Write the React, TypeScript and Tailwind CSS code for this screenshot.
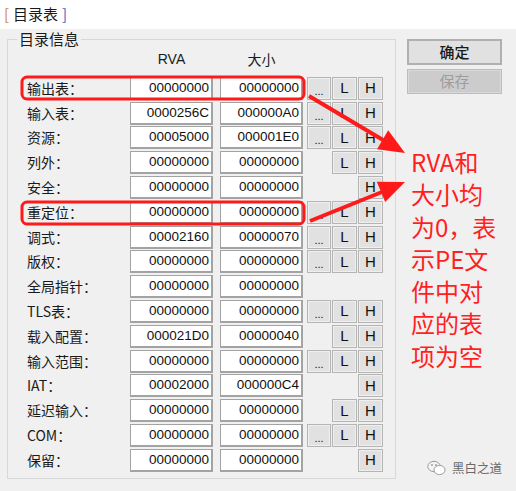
import React from "react";

type Row = {
  label: string;
  rva: string;
  size: string;
  dots?: boolean;
  l?: boolean;
  h?: boolean;
};

const rows: Row[] = [
  { label: "输出表：", rva: "00000000", size: "00000000", dots: true, l: true, h: true },
  { label: "输入表：", rva: "0000256C", size: "000000A0", dots: true, l: true, h: true },
  { label: "资源：", rva: "00005000", size: "000001E0", dots: true, l: true, h: true },
  { label: "列外：", rva: "00000000", size: "00000000", l: true, h: true },
  { label: "安全：", rva: "00000000", size: "00000000", h: true },
  { label: "重定位：", rva: "00000000", size: "00000000", dots: true, l: true, h: true },
  { label: "调式：", rva: "00002160", size: "00000070", dots: true, l: true, h: true },
  { label: "版权：", rva: "00000000", size: "00000000", dots: true, l: true, h: true },
  { label: "全局指针：", rva: "00000000", size: "00000000" },
  { label: "TLS表：", rva: "00000000", size: "00000000", dots: true, l: true, h: true },
  { label: "载入配置：", rva: "000021D0", size: "00000040", l: true, h: true },
  { label: "输入范围：", rva: "00000000", size: "00000000", dots: true, l: true, h: true },
  { label: "IAT：", rva: "00002000", size: "000000C4", h: true },
  { label: "延迟输入：", rva: "00000000", size: "00000000", l: true, h: true },
  { label: "COM：", rva: "00000000", size: "00000000", dots: true, l: true, h: true },
  { label: "保留：", rva: "00000000", size: "00000000", h: true },
];

const note = ["RVA和", "大小均", "为0，表", "示PE文", "件中对", "应的表", "项为空"];

function ValueBox({ value }: { value: string }) {
  return (
    <div className="w-[83px] h-[23px] bg-white border border-[#a3a3a3] border-r-2 border-b-2 flex items-center justify-end pr-[2px] text-[13.5px] text-[#111] font-['Liberation_Sans',sans-serif]">
      {value}
    </div>
  );
}

function SmallButton({ children, show, wide }: { children: React.ReactNode; show?: boolean; wide?: boolean }) {
  if (!show) return <div className={wide ? "w-[24px]" : "w-[25px]"} />;
  return (
    <div
      className={
        "h-[23px] bg-[#e1e1e1] border border-[#b4b4b4] shadow-[inset_0_0_0_1px_#efefef] flex items-center justify-center text-[#111] " +
        (wide ? "w-[24px]" : "w-[25px]")
      }
    >
      {children}
    </div>
  );
}

export default function App() {
  return (
    <div className="relative w-[516px] h-[491px] bg-[#f0f0f0] overflow-hidden font-['Noto_Sans_CJK_SC',sans-serif] text-[#1a1a1a]">
      {/* title strip */}
      <div className="h-[29px] bg-white flex items-center pl-[4px] text-[15px]">
        <span className="text-[#d9822b]">[</span>
        <span className="ml-[4px]">目录表</span>
        <span className="ml-[4px] text-[#2f6bc4]">]</span>
      </div>

      <div className="flex">
        {/* group box */}
        <fieldset className="ml-[7px] w-[389px] h-[450px] border border-[#d8d8d8]">
          <legend className="ml-[9px] px-[2px] text-[15px] leading-[20px]">目录信息</legend>

          <div className="flex h-[20px] items-center text-[14px]">
            <div className="w-[122px]" />
            <div className="w-[83px] text-center font-['Liberation_Sans',sans-serif]">RVA</div>
            <div className="w-[7px]" />
            <div className="w-[83px] text-center">大小</div>
          </div>

          <div className="mt-[7px] flex flex-col">
            {rows.map((r) => (
              <div key={r.label} className="h-[24.8px] flex items-center">
                <div className="w-[122px] pl-[19px] text-[14px] whitespace-nowrap">{r.label}</div>
                <ValueBox value={r.rva} />
                <div className="w-[7px]" />
                <ValueBox value={r.size} />
                <div className="w-[4px]" />
                <SmallButton show={r.dots} wide>
                  <span className="text-[11px] leading-none pt-[6px] font-['Liberation_Sans',sans-serif]">...</span>
                </SmallButton>
                <div className="w-[1px]" />
                <SmallButton show={r.l}>
                  <span className="text-[15px] font-['Liberation_Sans',sans-serif]">L</span>
                </SmallButton>
                <div className="w-[1px]" />
                <SmallButton show={r.h}>
                  <span className="text-[15px] font-['Liberation_Sans',sans-serif]">H</span>
                </SmallButton>
              </div>
            ))}
          </div>
        </fieldset>

        {/* right column */}
        <div className="ml-[11px] mt-[10px] w-[95px] flex flex-col">
          <div className="h-[26px] bg-[#e1e1e1] border-2 border-[#b0b0b0] flex items-center justify-center text-[15px] font-medium">
            确定
          </div>
          <div className="mt-[4px] h-[25px] bg-[#cccccc] border border-[#bdbdbd] shadow-[inset_0_0_0_1px_#d9d9d9] flex items-center justify-center text-[15px] text-[#9d9d9d]">
            保存
          </div>
          <div className="mt-[52px] ml-[4px] text-[24px] leading-[32.3px] text-[#ff1f1f] whitespace-nowrap">
            {note.map((t) => (
              <div key={t}>{t}</div>
            ))}
          </div>
        </div>
      </div>

      {/* red markings */}
      <svg className="absolute inset-0 pointer-events-none" width="516" height="491">
        <rect x="22" y="77" width="282" height="22" rx="5" fill="none" stroke="#ff1a1a" strokeWidth="3" />
        <rect x="22" y="202" width="282" height="22" rx="5" fill="none" stroke="#ff1a1a" strokeWidth="3" />
        <line x1="309" y1="96" x2="383" y2="140" stroke="#ff1a1a" strokeWidth="4" />
        <polygon points="405,153 377,149.3 388.2,130.3" fill="#ff1a1a" />
        <line x1="310" y1="221" x2="382" y2="192" stroke="#ff1a1a" strokeWidth="4" />
        <polygon points="405,182 385.2,202.1 376.8,181.7" fill="#ff1a1a" />
      </svg>

      {/* watermark */}
      <div className="absolute left-[427px] top-[459px] flex items-center gap-[6px] text-[12.5px] text-[#6a6a6a]">
        <svg width="19" height="16" viewBox="0 0 19 16">
          <ellipse cx="7" cy="6.5" rx="6.2" ry="5.2" fill="#f4f4f4" stroke="#9a9a9a" strokeWidth="1" />
          <ellipse cx="12.5" cy="10" rx="5.5" ry="4.6" fill="#fff" stroke="#9a9a9a" strokeWidth="1" />
          <circle cx="5" cy="5" r="0.9" fill="#9a9a9a" />
          <circle cx="9" cy="5" r="0.9" fill="#9a9a9a" />
        </svg>
        <span>黑白之道</span>
      </div>
    </div>
  );
}
